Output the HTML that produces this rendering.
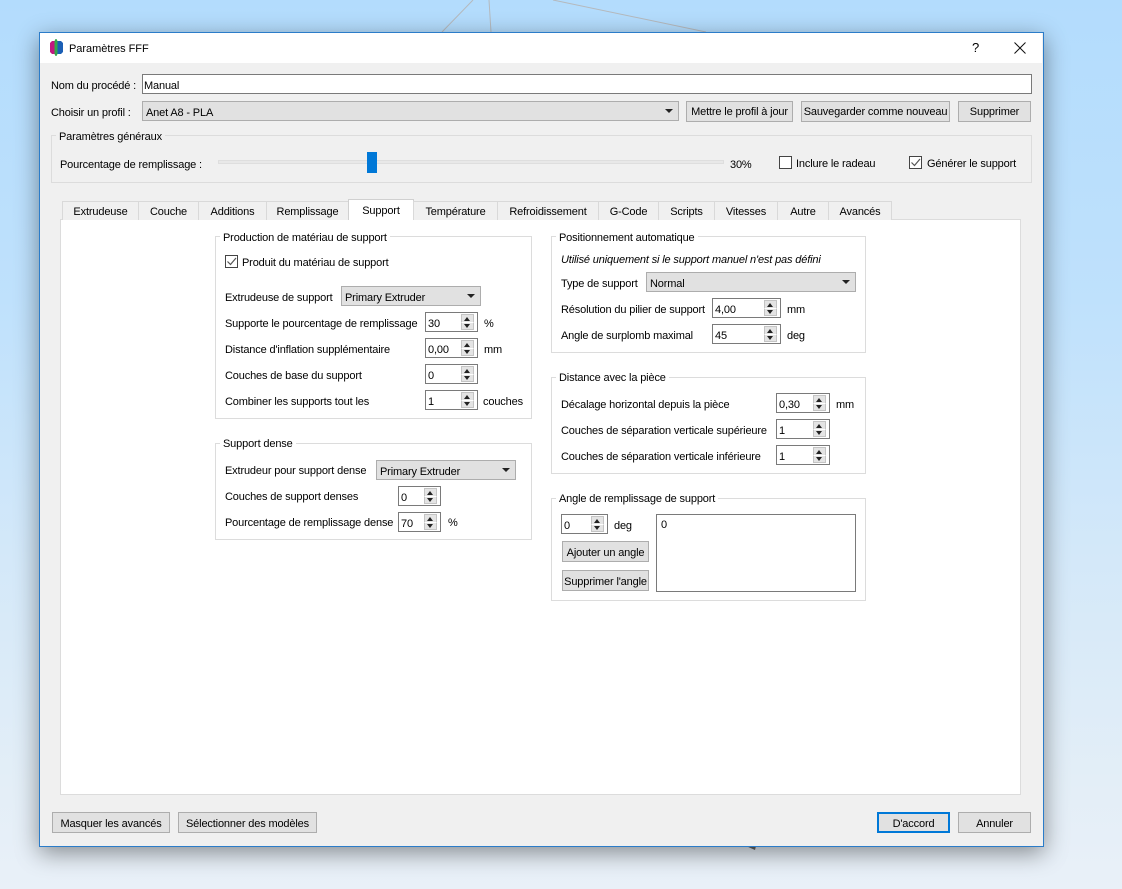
<!DOCTYPE html>
<html lang="fr"><head><meta charset="utf-8"><title>Paramètres FFF</title>
<style>
html,body{margin:0;padding:0;width:1122px;height:889px;overflow:hidden}
body{position:relative;font-family:"Liberation Sans",sans-serif;font-size:11px;letter-spacing:-.15px;color:#000;background:linear-gradient(180deg,#b3dcfd 0,#bfe1fc 300px,#d3e8f9 550px,#e3eef7 780px,#e9f0f8 889px)}
#w{position:absolute;left:39px;top:32px;width:1003px;height:813px;background:#f0f0f0;border:1px solid #2b7cc9;box-shadow:0 6px 22px rgba(0,0,0,.42)}
#bar{position:absolute;left:40px;top:33px;width:1002px;height:30px;background:#fff}
.t{position:absolute;white-space:nowrap;line-height:14px;margin-top:1px}
.i{position:absolute;box-sizing:border-box;background:#fff;border:1px solid #7a7a7a;line-height:22px;padding-left:1px;white-space:nowrap}
.c{position:absolute;box-sizing:border-box;background:#e1e1e1;border:1px solid #adadad;line-height:22px;padding-left:3px;white-space:nowrap}
.c::after{content:"";position:absolute;right:5px;top:7px;border-left:4px solid transparent;border-right:4px solid transparent;border-top:4px solid #222}
.b{position:absolute;box-sizing:border-box;background:#e1e1e1;border:1px solid #adadad;text-align:center;white-space:nowrap}
.g{position:absolute;box-sizing:border-box;border:1px solid #dcdcdc}
.gt{position:absolute;white-space:nowrap;line-height:14px;background:#f0f0f0;padding:0 3px;margin-top:1px}
.wg{background:#fff}
.gw{background:#fff;padding:0 3px}
.s{position:absolute;box-sizing:border-box;width:53px;height:20px;background:#fff;border:1px solid #7a7a7a;line-height:22px;padding-left:2px}
.s i{position:absolute;right:3px;box-sizing:border-box;width:13px;background:#e4e4e4;border:1px solid #c4c4c4}
.s i.u{top:1px;height:9px;border-bottom:0}
.s i.d{top:9px;height:8px;border-top:1px solid #fff}
.s i.u::after{content:"";position:absolute;left:2px;top:2px;border-left:3.5px solid transparent;border-right:3.5px solid transparent;border-bottom:4px solid #222}
.s i.d::after{content:"";position:absolute;left:2px;top:1px;border-left:3.5px solid transparent;border-right:3.5px solid transparent;border-top:4px solid #222}
.k{position:absolute;box-sizing:border-box;width:13px;height:13px;background:#fff;border:1px solid #444}
.k svg{position:absolute;left:0;top:0}
.tab{position:absolute;box-sizing:border-box;top:201px;height:19px;background:#f0f0f0;border:1px solid #d9d9d9;border-bottom:0;text-align:center;line-height:20px}
</style></head><body>
<svg style="position:absolute;left:0;top:0" width="1122" height="889"><g stroke="#b5b9bd" stroke-width="1" fill="none"><path d="M473 0L442 32M489 0L491 32M553 0L706 32"/></g><path d="M746 846L756 846L755 850Z" fill="#666"/></svg>
<div id="w"></div><div id="bar"></div>
<svg style="position:absolute;left:49px;top:39px" width="15" height="17"><path d="M1 4L3 2H5.5V15H3L1 13Z" fill="#c2187f"/><path d="M5.500 2L6.500 0H7.500L8.500 2V15L7.500 17H6.500L5.500 15Z" fill="#35a84a"/><path d="M8.500 2H12L14 4V13L12 15H8.500Z" fill="#1b5fb5"/></svg>
<div class="t" style="left:69px;top:41px;letter-spacing:-.03px">Paramètres FFF</div>
<div class="t" style="left:972px;top:40px;font-size:13px">?</div>
<svg style="position:absolute;left:1014px;top:42px" width="12" height="12"><path d="M.5 .5L11.5 11.5M11.5 .5L.5 11.5" stroke="#111" fill="none"/></svg>

<div class="t" style="left:51px;top:78px">Nom du procédé :</div>
<div class="i" style="left:142px;top:74px;width:890px;height:20px">Manual</div>
<div class="t" style="left:51px;top:105px">Choisir un profil :</div>
<div class="c" style="left:142px;top:101px;width:537px;height:20px">Anet A8 - PLA</div>
<div class="b" style="left:686px;top:101px;width:107px;height:21px;line-height:21px">Mettre le profil à jour</div>
<div class="b" style="left:801px;top:101px;width:149px;height:21px;line-height:21px">Sauvegarder comme nouveau</div>
<div class="b" style="left:958px;top:101px;width:73px;height:21px;line-height:21px">Supprimer</div>

<div class="g" style="left:51px;top:135px;width:981px;height:48px"></div>
<div class="gt" style="left:56px;top:129px">Paramètres généraux</div>
<div class="t" style="left:60px;top:157px">Pourcentage de remplissage :</div>
<div style="position:absolute;left:218px;top:160px;width:506px;height:4px;background:#e8e8e8;border:1px solid #dedede;box-sizing:border-box"></div>
<div style="position:absolute;left:367px;top:152px;width:10px;height:21px;background:#0078d7"></div>
<div class="t" style="left:730px;top:157px">30%</div>
<div class="k" style="left:779px;top:156px"></div>
<div class="t" style="left:796px;top:156px">Inclure le radeau</div>
<div class="k" style="left:909px;top:156px"><svg width="11" height="11"><path d="M1.5 5.5L4.5 8.5L10 2" stroke="#555" fill="none" stroke-width="1.2"/></svg></div>
<div class="t" style="left:927px;top:156px">Générer le support</div>

<div class="g wg" style="left:60px;top:219px;width:961px;height:576px"></div>
<div class="tab" style="left:62px;width:77px">Extrudeuse</div>
<div class="tab" style="left:138px;width:61px">Couche</div>
<div class="tab" style="left:198px;width:69px">Additions</div>
<div class="tab" style="left:266px;width:83px">Remplissage</div>
<div class="tab" style="left:348px;top:199px;height:21px;width:66px;background:#fff;line-height:23px;border-color:#d0d0d0">Support</div>
<div class="tab" style="left:413px;width:85px">Température</div>
<div class="tab" style="left:497px;width:102px">Refroidissement</div>
<div class="tab" style="left:598px;width:61px">G-Code</div>
<div class="tab" style="left:658px;width:57px">Scripts</div>
<div class="tab" style="left:714px;width:64px">Vitesses</div>
<div class="tab" style="left:777px;width:52px">Autre</div>
<div class="tab" style="left:828px;width:64px">Avancés</div>

<div class="g" style="left:215px;top:236px;width:317px;height:183px"></div>
<div class="gt gw" style="left:220px;top:230px">Production de matériau de support</div>
<div class="k" style="left:225px;top:255px"><svg width="11" height="11"><path d="M1.5 5.5L4.5 8.5L10 2" stroke="#555" fill="none" stroke-width="1.2"/></svg></div>
<div class="t" style="left:242px;top:255px">Produit du matériau de support</div>
<div class="t" style="left:225px;top:290px">Extrudeuse de support</div>
<div class="c" style="left:341px;top:286px;width:140px;height:20px">Primary Extruder</div>
<div class="t" style="left:225px;top:316px">Supporte le pourcentage de remplissage</div>
<div class="s" style="left:425px;top:312px">30<i class="u"></i><i class="d"></i></div>
<div class="t" style="left:484px;top:316px">%</div>
<div class="t" style="left:225px;top:342px">Distance d'inflation supplémentaire</div>
<div class="s" style="left:425px;top:338px">0,00<i class="u"></i><i class="d"></i></div>
<div class="t" style="left:484px;top:342px">mm</div>
<div class="t" style="left:225px;top:368px">Couches de base du support</div>
<div class="s" style="left:425px;top:364px">0<i class="u"></i><i class="d"></i></div>
<div class="t" style="left:225px;top:394px">Combiner les supports tout les</div>
<div class="s" style="left:425px;top:390px">1<i class="u"></i><i class="d"></i></div>
<div class="t" style="left:483px;top:394px">couches</div>

<div class="g" style="left:215px;top:443px;width:317px;height:97px"></div>
<div class="gt gw" style="left:220px;top:436px">Support dense</div>
<div class="t" style="left:225px;top:463px">Extrudeur pour support dense</div>
<div class="c" style="left:376px;top:460px;width:140px;height:20px">Primary Extruder</div>
<div class="t" style="left:225px;top:489px">Couches de support denses</div>
<div class="s" style="left:398px;top:486px;width:43px">0<i class="u"></i><i class="d"></i></div>
<div class="t" style="left:225px;top:515px">Pourcentage de remplissage dense</div>
<div class="s" style="left:398px;top:512px;width:43px">70<i class="u"></i><i class="d"></i></div>
<div class="t" style="left:448px;top:515px">%</div>

<div class="g" style="left:551px;top:236px;width:315px;height:117px"></div>
<div class="gt gw" style="left:556px;top:230px">Positionnement automatique</div>
<div class="t" style="left:561px;top:252px;font-style:italic">Utilisé uniquement si le support manuel n'est pas défini</div>
<div class="t" style="left:561px;top:276px">Type de support</div>
<div class="c" style="left:646px;top:272px;width:210px;height:20px">Normal</div>
<div class="t" style="left:561px;top:302px">Résolution du pilier de support</div>
<div class="s" style="left:712px;top:298px;width:69px">4,00<i class="u"></i><i class="d"></i></div>
<div class="t" style="left:787px;top:302px">mm</div>
<div class="t" style="left:561px;top:328px">Angle de surplomb maximal</div>
<div class="s" style="left:712px;top:324px;width:69px">45<i class="u"></i><i class="d"></i></div>
<div class="t" style="left:787px;top:328px">deg</div>

<div class="g" style="left:551px;top:377px;width:315px;height:97px"></div>
<div class="gt gw" style="left:556px;top:370px">Distance avec la pièce</div>
<div class="t" style="left:561px;top:397px">Décalage horizontal depuis la pièce</div>
<div class="s" style="left:776px;top:393px;width:54px">0,30<i class="u"></i><i class="d"></i></div>
<div class="t" style="left:836px;top:397px">mm</div>
<div class="t" style="left:561px;top:423px">Couches de séparation verticale supérieure</div>
<div class="s" style="left:776px;top:419px;width:54px">1<i class="u"></i><i class="d"></i></div>
<div class="t" style="left:561px;top:449px">Couches de séparation verticale inférieure</div>
<div class="s" style="left:776px;top:445px;width:54px">1<i class="u"></i><i class="d"></i></div>

<div class="g" style="left:551px;top:498px;width:315px;height:103px"></div>
<div class="gt gw" style="left:556px;top:491px">Angle de remplissage de support</div>
<div class="s" style="left:561px;top:514px;width:47px">0<i class="u"></i><i class="d"></i></div>
<div class="t" style="left:614px;top:518px">deg</div>
<div class="b" style="left:562px;top:541px;width:87px;height:21px;line-height:23px">Ajouter un angle</div>
<div class="b" style="left:562px;top:570px;width:87px;height:21px;line-height:23px">Supprimer l'angle</div>
<div class="i" style="left:656px;top:514px;width:200px;height:78px;padding-left:4px;line-height:20px">0</div>

<div class="b" style="left:52px;top:812px;width:118px;height:21px;line-height:23px">Masquer les avancés</div>
<div class="b" style="left:178px;top:812px;width:139px;height:21px;line-height:23px">Sélectionner des modèles</div>
<div class="b" style="left:877px;top:812px;width:73px;height:21px;line-height:21px;border:2px solid #0078d7">D'accord</div>
<div class="b" style="left:958px;top:812px;width:73px;height:21px;line-height:23px">Annuler</div>
</body></html>
